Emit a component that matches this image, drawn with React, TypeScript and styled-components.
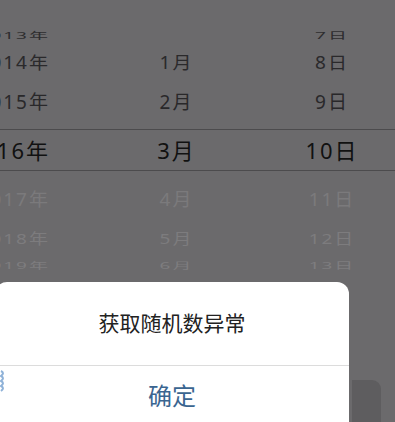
import React from "react";
import styled, { createGlobalStyle } from "styled-components";

const GlobalStyle = createGlobalStyle`
  html, body {
    margin: 0;
    padding: 0;
    background: #6b6a6c;
    overflow: hidden;
  }
  body {
    font-family: "Noto Sans", "Noto Sans CJK SC", sans-serif;
  }
`;

const Screen = styled.div`
  width: 395px;
  height: 422px;
  background: #6b6a6c;
  overflow: hidden;
  display: flex;
  flex-direction: column;
`;

const Picker = styled.div`
  padding-top: 22px;
  display: flex;
  flex-direction: column;
`;

const Row = styled.div<{ $h: number; $selected?: boolean }>`
  height: ${(p) => p.$h}px;
  display: grid;
  grid-template-columns: 50px 253px 58px;
  align-items: center;
  ${(p) =>
    p.$selected &&
    `
    border-top: 1px solid #4c4b4d;
    border-bottom: 1px solid #4c4b4d;
  `}
`;

const Cell = styled.span<{ $align: "flex-end" | "center"; $tone: string; $size: number; $squash: number }>`
  display: flex;
  justify-content: ${(p) => p.$align};
  white-space: nowrap;
  color: ${(p) => p.$tone};
  font-size: ${(p) => p.$size}px;
  letter-spacing: 2px;
  line-height: 1;
  transform: scaleY(${(p) => p.$squash});
`;

const Bottom = styled.div`
  display: flex;
  align-items: flex-start;
  flex: 1;
`;

const Dialog = styled.div`
  position: relative;
  margin-left: -5px;
  width: 354px;
  height: 150px;
  background: #ffffff;
  border-radius: 12px 12px 0 0;
  display: flex;
  flex-direction: column;
  font-family: "Noto Sans CJK SC", sans-serif;
`;

const Message = styled.div`
  height: 85px;
  display: flex;
  align-items: center;
  justify-content: center;
  font-size: 21px;
  color: #222222;
  border-bottom: 1px solid #dcdcdc;
  padding-bottom: 3px;
  box-sizing: border-box;
`;

const Confirm = styled.button`
  border: 0;
  background: transparent;
  height: 66px;
  padding: 0 0 10px;
  font-family: inherit;
  font-size: 24px;
  color: #3a6590;
`;

const BehindButton = styled.div`
  margin-top: 98px;
  margin-left: 3px;
  width: 29px;
  height: 60px;
  background: #5e5d5f;
  border-radius: 0 9px 0 0;
`;

const Squiggle = styled.svg`
  position: absolute;
  left: 5px;
  top: 87px;
`;

const rows = [
  { h: 28, y: "2013年", m: "", d: "7日", tone: "#2e2d2f", size: 19, squash: 0.45 },
  { h: 26, y: "2014年", m: "1月", d: "8日", tone: "#2a292b", size: 19, squash: 0.92 },
  { h: 53, y: "2015年", m: "2月", d: "9日", tone: "#29282a", size: 19, squash: 1 },
  { h: 40, y: "2016年", m: "3月", d: "10日", tone: "#111111", size: 22, squash: 1, selected: true },
  { h: 56, y: "2017年", m: "4月", d: "11日", tone: "#7b7a7c", size: 19, squash: 0.97 },
  { h: 24, y: "2018年", m: "5月", d: "12日", tone: "#7d7c7e", size: 19, squash: 0.75 },
  { h: 31, y: "2019年", m: "6月", d: "13日", tone: "#7e7d7f", size: 19, squash: 0.45 },
];

export default function App() {
  return (
    <Screen>
      <GlobalStyle />
      <Picker>
        {rows.map((r) => (
          <Row key={r.y} $h={r.h} $selected={r.selected}>
            <Cell $align="flex-end" $tone={r.tone} $size={r.size} $squash={r.squash}>
              {r.y}
            </Cell>
            <Cell $align="center" $tone={r.tone} $size={r.size} $squash={r.squash}>
              {r.m}
            </Cell>
            <Cell $align="center" $tone={r.tone} $size={r.size} $squash={r.squash}>
              {r.d}
            </Cell>
          </Row>
        ))}
      </Picker>
      <Bottom>
        <Dialog>
          <Squiggle width="6" height="24" viewBox="0 0 6 24">
            <path d="M1 2 q4 2 0 5 q4 2 0 5 q4 2 0 5 q4 2 0 5" fill="none" stroke="#8fb2d8" strokeWidth="2" />
          </Squiggle>
          <Message>获取随机数异常</Message>
          <Confirm>确定</Confirm>
        </Dialog>
        <BehindButton />
      </Bottom>
    </Screen>
  );
}
